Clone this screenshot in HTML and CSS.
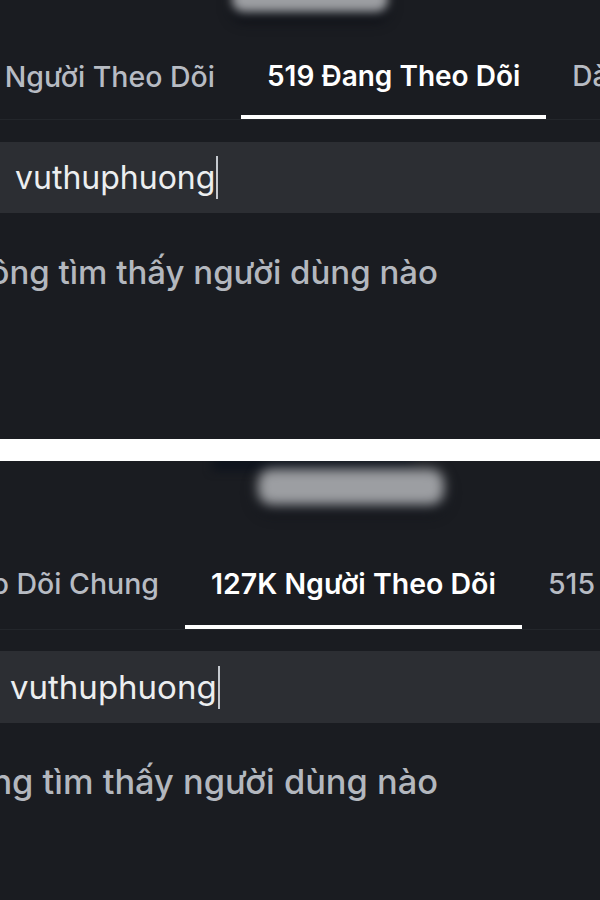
FILE: index.html
```html
<!DOCTYPE html>
<html lang="vi">
<head>
  <meta charset="UTF-8">
  <meta name="viewport" content="width=device-width, initial-scale=1.0">
  <title>Đang Theo Dõi</title>
  <link rel="stylesheet" href="styles.css">
</head>
<body>

<div class="panel panel-one">
  <div class="top">
    <div class="name-blur"></div>
  </div>
  <div class="tabs">
    <div class="tab tab-first">127K Người Theo Dõi</div>
    <div class="tab active">519 Đang Theo Dõi</div>
    <div class="tab">Dành cho bạn</div>
  </div>
  <div class="search">
    <span class="query">vuthuphuong</span><span class="caret"></span>
  </div>
  <div class="msg"><span>Không tìm thấy người dùng nào</span></div>
</div>

<div class="gap"></div>

<div class="panel panel-two">
  <div class="top">
    <div class="dark-blur"></div>
    <div class="name-blur"></div>
  </div>
  <div class="tabs">
    <div class="tab tab-first">Theo Dõi Chung</div>
    <div class="tab active">127K Người Theo Dõi</div>
    <div class="tab">515 Đang Theo Dõi</div>
  </div>
  <div class="search">
    <span class="query">vuthuphuong</span><span class="caret"></span>
  </div>
  <div class="msg"><span>Không tìm thấy người dùng nào</span></div>
</div>

</body>
</html>
```

FILE: styles.css
```css
body {
  margin: 0;
  background-color: #ffffff;
  font-family: Inter, "Noto Sans", sans-serif;
  overflow: hidden;
}
.panel {
  background-color: #1a1c21;
  height: 439px;
  overflow: hidden;
}
.gap {
  height: 22px;
  background-color: #ffffff;
}

/* blurred account name */
.top {
  display: flow-root;
  height: 40px;
}
.name-blur {
  width: 156px;
  height: 26px;
  margin-left: 232px;
  margin-top: -14px;
  background-color: #9c9ea2;
  border-radius: 12px;
  filter: blur(5px);
  box-shadow: 0 8px 8px #0a0d14;
}
.panel-two .top {
  height: 83px;
}
.panel-two .dark-blur {
  width: 200px;
  height: 18px;
  margin-left: 212px;
  margin-top: -8px;
  background-color: #0f141d;
  filter: blur(4px);
}
.panel-two .name-blur {
  width: 186px;
  height: 36px;
  margin-left: 258px;
  margin-top: -2px;
  border-radius: 14px;
  filter: blur(6px);
  box-shadow: 0 6px 8px #0a0d14;
}

/* tabs */
.tabs {
  display: flex;
  height: 79px;
  border-bottom: 1px solid #23262b;
  white-space: nowrap;
}
.panel-two .tabs {
  height: 85px;
}
.tab {
  display: flex;
  align-items: center;
  flex-shrink: 0;
  padding: 0 26px 3px;
  border-bottom: 4px solid transparent;
  font-size: 28px;
  font-weight: 500;
  color: #b7bbc3;
}
.tab-first {
  width: 241px;
  box-sizing: border-box;
  justify-content: flex-end;
  font-size: 28.5px;
}
.panel-two .tab-first {
  width: 185px;
}
.panel-two .tab {
  font-size: 28.5px;
}
.tab.active {
  color: #ffffff;
  font-weight: 600;
  border-bottom-color: #ffffff;
}

/* search box */
.search {
  display: flex;
  align-items: center;
  height: 71px;
  margin-top: 22px;
  padding-left: 15px;
  background-color: #2c2e33;
}
.panel-two .search {
  height: 72px;
  margin-top: 21px;
  padding-left: 10px;
}
.query {
  font-size: 32px;
  color: #eceef0;
}
.panel-two .query {
  font-size: 33px;
}
.caret {
  width: 2px;
  height: 43px;
  margin-left: 1px;
  background-color: #c5c9cf;
}

/* empty result */
.msg {
  display: flex;
  justify-content: flex-end;
  width: 438px;
  margin-top: 40px;
  font-size: 33px;
  line-height: 38px;
  font-weight: 500;
  color: #b3b7be;
  white-space: nowrap;
}
.panel-two .msg {
  font-size: 34.4px;
}
```
